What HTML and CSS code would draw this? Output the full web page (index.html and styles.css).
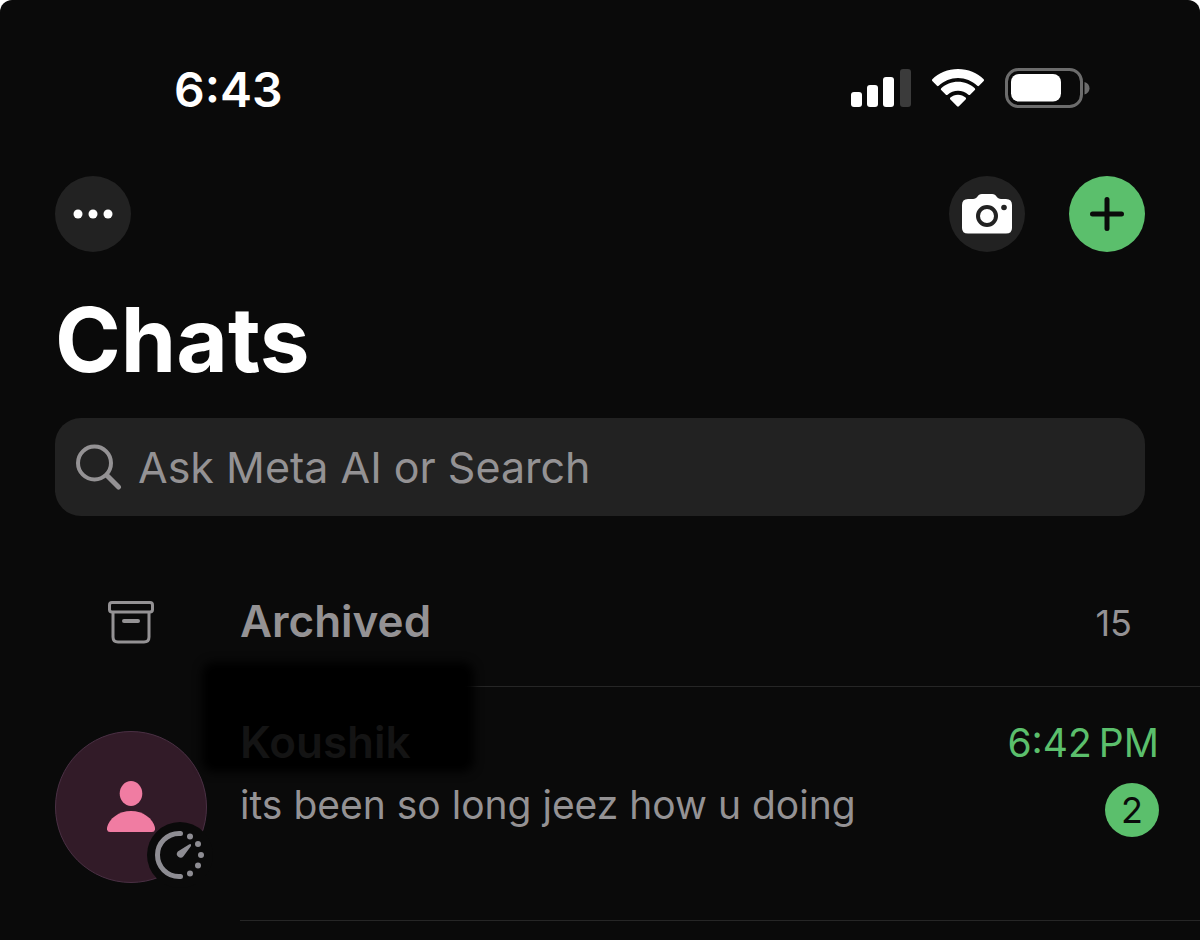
FILE: index.html
```html
<!DOCTYPE html>
<html lang="en">
<head>
    <meta charset="UTF-8">
    <meta name="viewport" content="width=device-width, initial-scale=1.0">
    <title>Chats</title>
    <link rel="stylesheet" href="styles.css">
</head>
<body>
    <div class="screen">
        <div class="status-bar">
            <time class="clock">6:43</time>
            <div class="status-icons">
                <svg class="signal" width="60" height="38" viewBox="0 0 60 38">
                    <rect x="0" y="23" width="11" height="15" rx="3"/>
                    <rect x="16" y="16" width="11" height="22" rx="3"/>
                    <rect x="32" y="8" width="11" height="30" rx="3"/>
                    <rect class="off" x="49" y="0" width="11" height="38" rx="3"/>
                </svg>
                <svg class="wifi" width="54" height="38" viewBox="0 0 54 38">
                    <path d="M27 0C17 0 7.500 3.800 1.300 10.300Q.5 11.200 1.300 12L6 16.800Q6.800 17.500 7.700 16.800C13 11.800 19.700 9 27 9S41 11.800 46.300 16.800Q47.200 17.500 48 16.800L52.700 12Q53.500 11.200 52.700 10.300C46.500 3.800 37 0 27 0Z"/>
                    <path d="M27 12.800C20.500 12.800 14.600 15.300 10.200 19.200Q9.300 20.100 10.200 21L14.900 25.700Q15.700 26.400 16.600 25.700C19.500 23.200 23 21.700 27 21.700S34.500 23.200 37.400 25.700Q38.300 26.400 39.100 25.700L43.800 21Q44.700 20.100 43.800 19.200C39.400 15.300 33.500 12.800 27 12.800Z"/>
                    <path d="M27 25.800C24 25.800 21.400 26.900 19.400 28.600Q18.500 29.500 19.400 30.400L26.100 37.300Q27 38.100 27.900 37.300L34.600 30.400Q35.500 29.500 34.600 28.600C32.600 26.900 30 25.800 27 25.800Z"/>
                </svg>
                <svg class="battery" width="85" height="40" viewBox="0 0 85 40">
                    <rect class="shell" x="1.500" y="1.500" width="75" height="37" rx="12"/>
                    <rect x="6" y="6" width="50" height="27.500" rx="8"/>
                    <path class="cap" d="M79.500 14C83 15 84.500 17.500 84.500 20.300S83 25.500 79.500 26.500Z"/>
                </svg>
            </div>
        </div>

        <header class="toolbar">
            <button type="button" class="round-btn" aria-label="More">
                <svg width="40" height="10" viewBox="0 0 40 10">
                    <circle cx="5" cy="5" r="4.500"/>
                    <circle cx="20" cy="5" r="4.500"/>
                    <circle cx="35" cy="5" r="4.500"/>
                </svg>
            </button>
            <div class="toolbar-right">
                <button type="button" class="round-btn" aria-label="Camera">
                    <svg width="50" height="40" viewBox="0 0 50 40">
                        <path d="M6 5H11C13 5 14.500 4 15.500 2.500C16.500 1 17.500 0 20 0H30C32.500 0 33.500 1 34.500 2.500C35.500 4 37 5 39 5H44Q50 5 50 11V34Q50 39.500 44 39.500H6Q0 39.500 0 34V11Q0 5 6 5Z"/>
                        <circle class="lens" cx="25" cy="22" r="9"/>
                        <circle class="flash" cx="42" cy="13.500" r="2.800"/>
                    </svg>
                </button>
                <button type="button" class="round-btn new-chat" aria-label="New chat">
                    <svg width="34" height="34" viewBox="0 0 34 34">
                        <path d="M17 2.500V31.500M2.500 17H31.500"/>
                    </svg>
                </button>
            </div>
        </header>

        <h1>Chats</h1>

        <label class="search">
            <svg width="46" height="46" viewBox="0 0 46 46">
                <circle cx="18.500" cy="19" r="16.500"/>
                <path class="grip" d="M31 31.500L42.500 43"/>
            </svg>
            <input type="search" placeholder="Ask Meta AI or Search" aria-label="Search">
        </label>

        <main class="chat-list">
            <a href="#" class="row archived">
                <span class="row-icon">
                    <svg width="46" height="43" viewBox="0 0 46 43">
                        <rect x="1.500" y="1.500" width="43" height="9.500" rx="2.500"/>
                        <path d="M5 11V36Q5 41 10 41H36Q41 41 41 36V11"/>
                        <path class="handle" d="M16 20H30"/>
                    </svg>
                </span>
                <span class="row-body">
                    <span class="row-name">Archived</span>
                    <span class="count">15</span>
                </span>
            </a>
            <a href="#" class="row chat">
                <span class="avatar">
                    <svg width="48" height="52" viewBox="0 0 48 52">
                        <ellipse cx="24" cy="12.500" rx="11.300" ry="12.500"/>
                        <path d="M24 30C36 30 46 37.500 48 46.500Q48.500 51 45 51H3Q-.5 51 0 46.500C2 37.500 12 30 24 30Z"/>
                    </svg>
                    <span class="timer">
                        <svg width="50" height="50" viewBox="0 0 50 50">
                            <path class="arc" d="M25.500 3.500H24A21.500 21.500 0 0 0 24 46.500H25.500"/>
                            <circle cx="35" cy="6.500" r="3"/>
                            <circle cx="43" cy="14" r="3"/>
                            <circle cx="46" cy="25" r="3"/>
                            <circle cx="43" cy="35.500" r="3"/>
                            <circle cx="35" cy="43.500" r="3"/>
                            <path d="M34 14.500Q36.500 13 36 16L28.500 26.300A3.700 3.700 0 1 1 22.800 21.500Z"/>
                        </svg>
                    </span>
                </span>
                <span class="row-body">
                    <span class="text">
                        <span class="row-name hidden-name">Koushik</span>
                        <span class="message">its been so long jeez how u doing</span>
                    </span>
                    <span class="meta">
                        <time>6:42&#8239;PM</time>
                        <span class="badge">2</span>
                    </span>
                </span>
            </a>
        </main>
    </div>
</body>
</html>
```
FILE: styles.css
```css
* {
    box-sizing: border-box;
}
body {
    margin: 0;
    background: #fff;
    font-family: Inter, "Liberation Sans", sans-serif;
    color: #fff;
}
.screen {
    min-height: 100vh;
    background: #0a0a0a;
    border-radius: 12px 12px 0 0;
    overflow: hidden;
}
svg {
    display: block;
    fill: #fff;
    flex-shrink: 0;
}

/* Status bar */
.status-bar {
    display: flex;
    justify-content: space-between;
    align-items: flex-start;
    padding: 60px 110px 0 174px;
}
.clock {
    font-size: 48px;
    line-height: 60px;
    font-weight: 600;
}
.status-icons {
    display: flex;
    align-items: center;
    gap: 20px;
    height: 56px;
}
.signal .off {
    fill: #3b3b3b;
}
.battery .shell {
    fill: none;
    stroke: #6c6c6c;
    stroke-width: 3;
}
.battery .cap {
    fill: #6c6c6c;
}

/* Toolbar */
.toolbar {
    display: flex;
    justify-content: space-between;
    padding: 56px 55px 0;
}
.toolbar-right {
    display: flex;
    gap: 44px;
}
.round-btn {
    display: flex;
    align-items: center;
    justify-content: center;
    width: 76px;
    height: 76px;
    padding: 0;
    border: none;
    border-radius: 50%;
    background: #222;
    cursor: pointer;
}
.round-btn .lens {
    stroke: #222;
    stroke-width: 4;
}
.round-btn .flash {
    fill: #222;
}
.new-chat {
    background: #5bbf6c;
}
.new-chat svg {
    fill: none;
    stroke: #0a0a0a;
    stroke-width: 5;
    stroke-linecap: round;
}
h1 {
    margin: 36px 55px 0;
    font-size: 89px;
    line-height: 104px;
    font-weight: 700;
}

/* Search */
.search {
    display: flex;
    align-items: center;
    gap: 16px;
    height: 98px;
    margin: 26px 55px 0;
    padding: 0 21px;
    border-radius: 26px;
    background: #222;
}
.search svg {
    fill: none;
    stroke: #949294;
    stroke-width: 4;
    stroke-linecap: round;
}
.search .grip {
    stroke-width: 5;
}
.search input {
    flex: 1;
    min-width: 0;
    padding: 0;
    border: none;
    outline: none;
    background: none;
    color: #fff;
    font-family: inherit;
    font-size: 43px;
}
.search input::placeholder {
    color: #949294;
    opacity: 1;
}

/* Chat list */
.chat-list {
    padding-top: 55px;
}
.row {
    display: flex;
    padding-left: 55px;
    color: #949294;
    text-decoration: none;
}
.row-icon {
    display: flex;
    align-items: center;
    justify-content: center;
    width: 152px;
    height: 102px;
}
.row-icon svg {
    fill: none;
    stroke: #949294;
    stroke-width: 3;
}
.row-icon .handle {
    stroke-width: 4;
    stroke-linecap: round;
}
.row-body {
    display: flex;
    flex: 1;
    justify-content: space-between;
    margin-left: 33px;
    border-bottom: 1px solid #262626;
}
.row-name {
    font-size: 44px;
    line-height: 52px;
    font-weight: 600;
}
.archived .row-body {
    padding: 24px 68px 35px 0;
}
.count {
    font-size: 36px;
    line-height: 56px;
}
.chat .row-body {
    height: 234px;
    padding: 29px 41px 0 0;
}
.text {
    display: flex;
    flex-direction: column;
}
.hidden-name {
    position: relative;
    color: #141414;
    z-index: 0;
}
/* dark smudge that hides the name */
.hidden-name::before {
    content: "";
    position: absolute;
    z-index: -1;
    left: -38px;
    top: -54px;
    width: 272px;
    height: 110px;
    border-radius: 12px;
    background: #000;
    filter: blur(5px);
}
.message {
    margin-top: 13px;
    font-size: 39px;
    line-height: 48px;
}
.meta {
    display: flex;
    flex-direction: column;
    align-items: flex-end;
    color: #5bbf6c;
    font-size: 39px;
    line-height: 54px;
}
.badge {
    width: 54px;
    height: 54px;
    margin-top: 13px;
    border-radius: 50%;
    background: #5bbf6c;
    color: #0a0a0a;
    font-size: 36px;
    text-align: center;
}
.avatar {
    position: relative;
    display: flex;
    align-items: center;
    justify-content: center;
    width: 152px;
    height: 152px;
    margin-top: 44px;
    border: 1px solid #4a3044;
    border-radius: 50%;
    background: #321b28;
}
.avatar svg {
    fill: #f07ca2;
}
.avatar .timer {
    position: absolute;
    right: -7px;
    bottom: -6px;
    display: flex;
    align-items: center;
    justify-content: center;
    width: 66px;
    height: 66px;
    border-radius: 50%;
    background: #0a0a0a;
}
.timer svg {
    fill: #8e8d93;
}
.timer .arc {
    fill: none;
    stroke: #8e8d93;
    stroke-width: 5;
    stroke-linecap: round;
}
```
